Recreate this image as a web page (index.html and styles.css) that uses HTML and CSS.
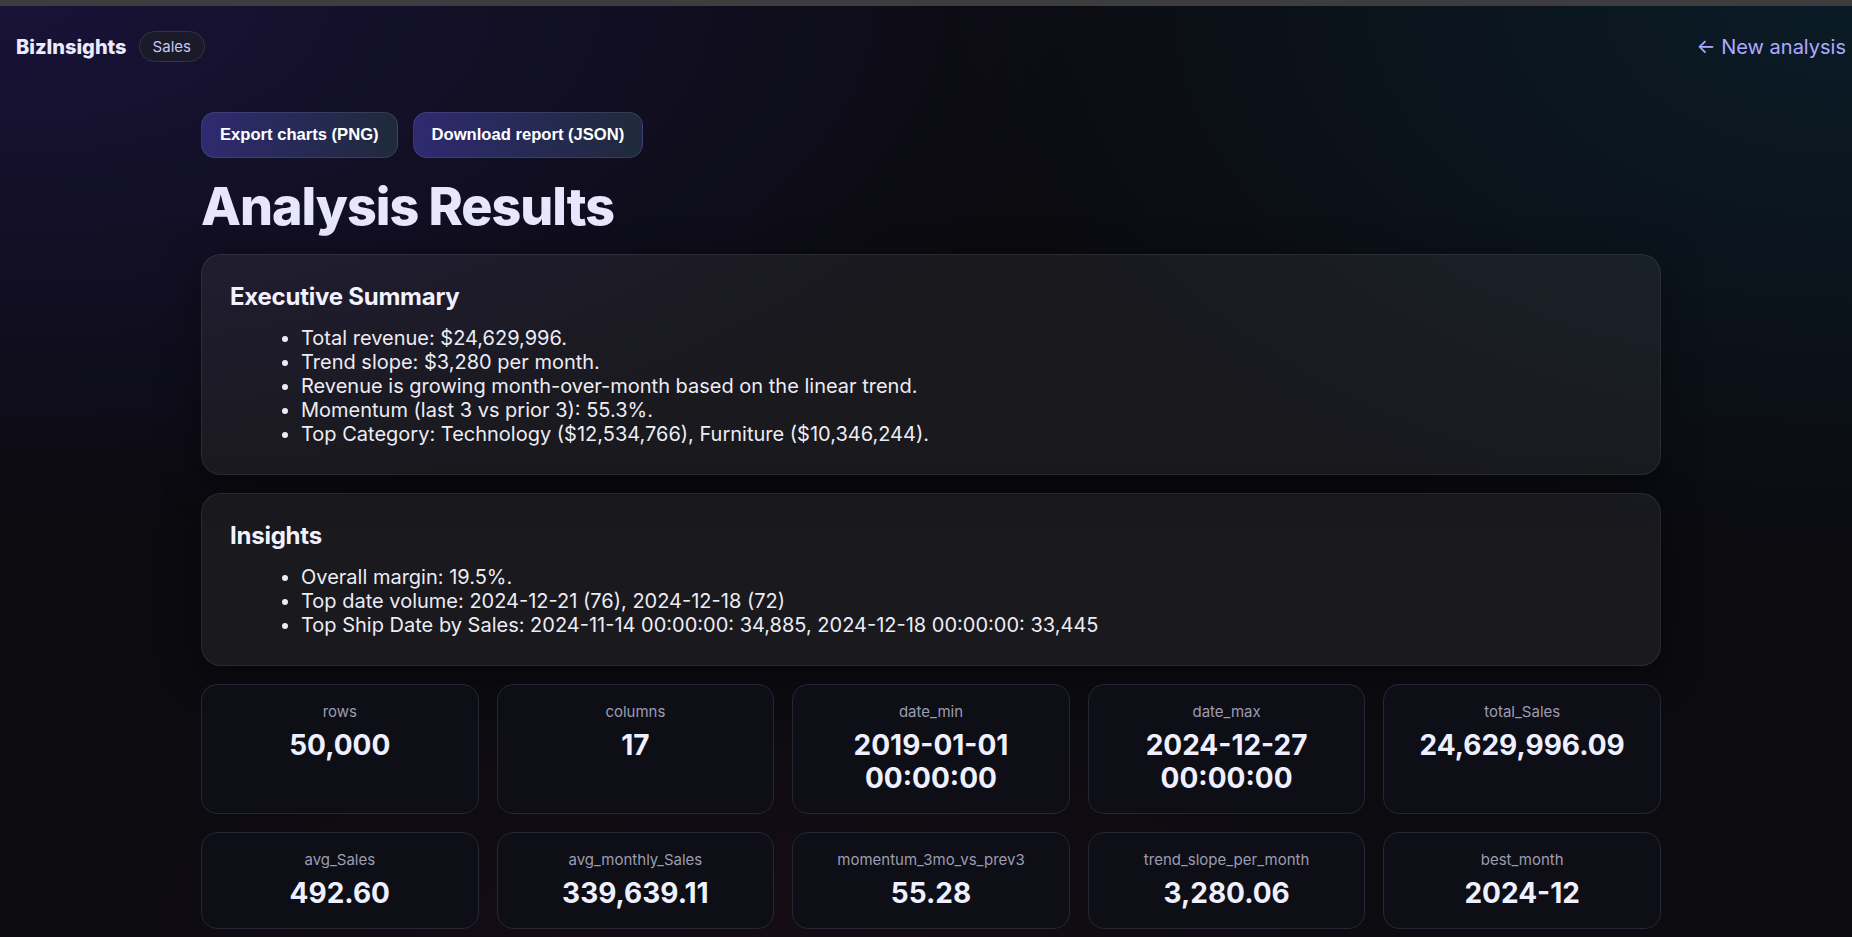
FILE: index.html
```html
<!DOCTYPE html>
<html lang="en">
<head>
<meta charset="utf-8">
<title>BizInsights – Analysis Results</title>
<link rel="stylesheet" href="styles.css">
</head>
<body>
<div class="topbar"></div>
<div class="app">
  <header class="header">
    <div class="brand">
      <span class="logo">BizInsights</span>
      <span class="pill">Sales</span>
    </div>
    <a class="back" href="#">← New analysis</a>
  </header>

  <main class="main">
    <div class="actions">
      <button class="btn">Export charts (PNG)</button>
      <button class="btn">Download report (JSON)</button>
    </div>

    <h1 class="title">Analysis Results</h1>

    <div class="sections">
      <section class="card">
        <h2 class="card-title">Executive Summary</h2>
        <ul class="list">
          <li>Total revenue: $24,629,996.</li>
          <li>Trend slope: $3,280 per month.</li>
          <li>Revenue is growing month-over-month based on the linear trend.</li>
          <li>Momentum (last 3 vs prior 3): 55.3%.</li>
          <li>Top Category: Technology ($12,534,766), Furniture ($10,346,244).</li>
        </ul>
      </section>

      <section class="card">
        <h2 class="card-title">Insights</h2>
        <ul class="list">
          <li>Overall margin: 19.5%.</li>
          <li>Top date volume: 2024-12-21 (76), 2024-12-18 (72)</li>
          <li>Top Ship Date by Sales: 2024-11-14 00:00:00: 34,885, 2024-12-18 00:00:00: 33,445</li>
        </ul>
      </section>

      <div class="stats">
        <div class="stat"><div class="stat-label">rows</div><div class="stat-value">50,000</div></div>
        <div class="stat"><div class="stat-label">columns</div><div class="stat-value">17</div></div>
        <div class="stat"><div class="stat-label">date_min</div><div class="stat-value">2019-01-01 00:00:00</div></div>
        <div class="stat"><div class="stat-label">date_max</div><div class="stat-value">2024-12-27 00:00:00</div></div>
        <div class="stat"><div class="stat-label">total_Sales</div><div class="stat-value">24,629,996.09</div></div>
        <div class="stat"><div class="stat-label">avg_Sales</div><div class="stat-value">492.60</div></div>
        <div class="stat"><div class="stat-label">avg_monthly_Sales</div><div class="stat-value">339,639.11</div></div>
        <div class="stat"><div class="stat-label">momentum_3mo_vs_prev3</div><div class="stat-value">55.28</div></div>
        <div class="stat"><div class="stat-label">trend_slope_per_month</div><div class="stat-value">3,280.06</div></div>
        <div class="stat"><div class="stat-label">best_month</div><div class="stat-value">2024-12</div></div>
      </div>
    </div>
  </main>
</div>
</body>
</html>
```

FILE: styles.css
```css
html, body {
  margin: 0;
  padding: 0;
}

body {
  overflow-x: hidden;
  min-height: 100vh;
  font-family: Inter, "Noto Sans", "Liberation Sans", sans-serif;
  color: #ececf4;
  background-color: #0b0b10;
  background-image:
    radial-gradient(ellipse 1100px 520px at 0% 0%, rgba(60, 40, 160, 0.28), rgba(60, 40, 160, 0) 100%),
    radial-gradient(ellipse 900px 560px at 100% 0%, rgba(10, 75, 105, 0.26), rgba(10, 75, 105, 0) 100%),
    radial-gradient(ellipse 700px 260px at 40% 100%, rgba(110, 20, 60, 0.12), rgba(110, 20, 60, 0) 100%);
  background-repeat: no-repeat;
}

.topbar {
  height: 6px;
  background: #3d3d3f;
}

.app {
  width: 1862px;
}

/* Header */
.header {
  display: flex;
  align-items: center;
  justify-content: space-between;
  padding: 25px 16px 0;
}

.brand {
  display: flex;
  align-items: center;
  gap: 12px;
}

.logo {
  font-size: 20px;
  font-weight: 800;
  color: #eceaff;
}

.pill {
  font-size: 15px;
  line-height: 17px;
  padding: 6px 13px;
  border-radius: 999px;
  background: #1b1a28;
  border: 1px solid #34324a;
  color: #c6c8f4;
}

.back {
  font-size: 20px;
  color: #aeaaff;
  text-decoration: none;
}

/* Main */
.main {
  width: 1460px;
  margin: 0 auto;
  padding-top: 50px;
}

.actions {
  display: flex;
  gap: 15px;
}

.btn {
  font-family: "Liberation Sans", Arial, sans-serif;
  font-size: 16.6px;
  font-weight: 700;
  line-height: 18px;
  padding: 13px 18px;
  color: #ffffff;
  border: 1px solid rgba(255, 255, 255, 0.1);
  border-radius: 14px;
  background: linear-gradient(90deg, #2e2a70 0%, #1f2a3b 100%);
}

.title {
  margin: 20px 0 19px;
  font-size: 52px;
  line-height: 1.1;
  font-weight: 800;
  letter-spacing: -0.02em;
  color: #e8e6fc;
}

.sections {
  display: grid;
  gap: 18px;
}

.card {
  padding: 28px;
  border-radius: 20px;
  border: 1px solid rgba(255, 255, 255, 0.08);
  background: rgba(255, 255, 255, 0.06);
  box-shadow: 0 10px 40px rgba(0, 0, 0, 0.35);
}

.card-title {
  margin: 0 0 14px;
  font-size: 24px;
  line-height: 28.8px;
  font-weight: 700;
  letter-spacing: -0.01em;
  color: #f2f2ff;
}

.list {
  margin: 0;
  padding-left: 71px;
}

.list li {
  font-size: 20px;
  line-height: 24px;
  color: #ececf4;
}

/* Stats */
.stats {
  display: grid;
  grid-template-columns: repeat(5, 1fr);
  gap: 18px;
}

.stat {
  padding: 18px 18px 17px;
  border-radius: 16px;
  border: 1px solid #262636;
  background: #0e0e16;
  text-align: center;
}

.stat-label {
  font-size: 15px;
  line-height: 18px;
  color: #9b9db2;
  margin-bottom: 8px;
}

.stat-value {
  font-size: 28px;
  line-height: 1.2;
  font-weight: 700;
  color: #eef0ff;
}
```
